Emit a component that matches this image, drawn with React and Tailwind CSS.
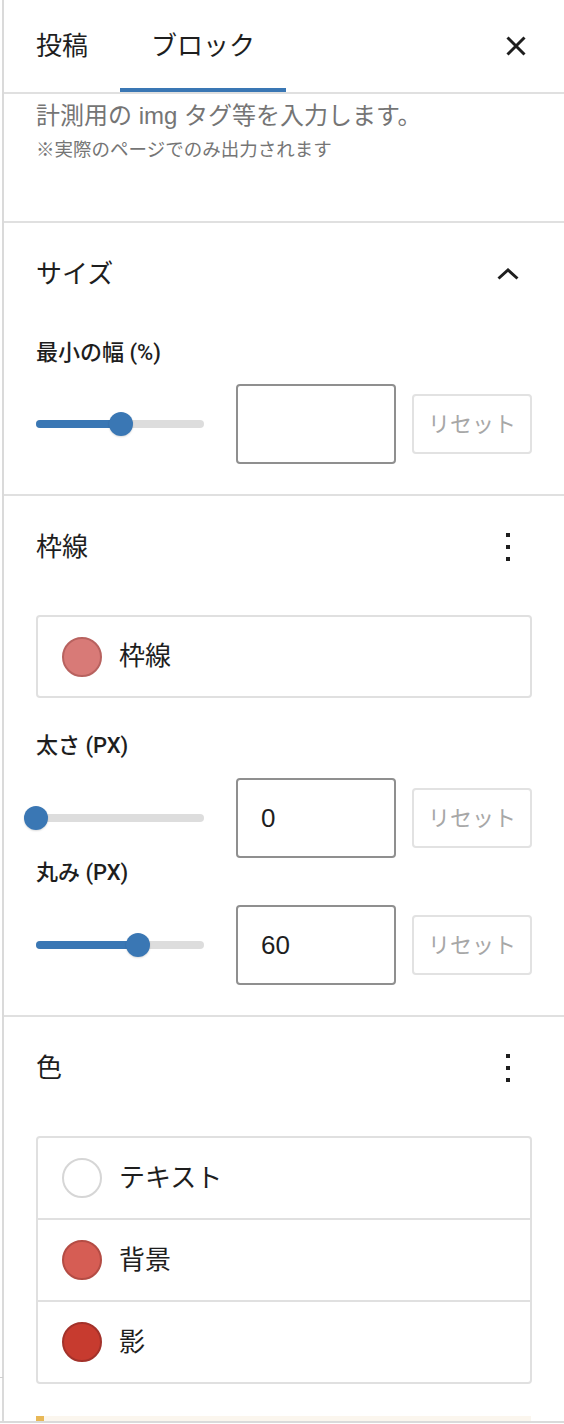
import React from 'react'

const BLUE = 'bg-[#3a77b4]'

function Slider({ value }) {
  return (
    <div className="relative h-[8px] w-[168px] shrink-0 rounded-full bg-[#dddddd]">
      <div className={`absolute left-0 top-0 h-full rounded-full ${BLUE}`} style={{ width: `${value}%` }} />
      <div
        className={`absolute top-1/2 h-6 w-6 -translate-x-1/2 -translate-y-1/2 rounded-full ${BLUE} shadow-[0_1px_2px_rgba(0,0,0,0.15)]`}
        style={{ left: `${value}%` }}
      />
    </div>
  )
}

function RangeRow({ value, text }) {
  return (
    <div className="flex items-center">
      <Slider value={value} />
      <input
        readOnly
        defaultValue={text}
        className="ml-[32px] h-[80px] w-[160px] rounded-[4px] border-2 border-[#8f8f8f] bg-white pl-[23px] text-[26px] text-[#1e1e1e] outline-none"
      />
      <button className="ml-[16px] h-[60px] w-[120px] rounded-[4px] border-2 border-[#e2e2e2] text-[22px] text-[#a7a7a7]">
        リセット
      </button>
    </div>
  )
}

// labels use a font with a real 500 weight for the latin part
function Label({ children, className = '' }) {
  return (
    <div
      className={`text-[22px] font-medium leading-[30px] text-[#1e1e1e] ${className}`}
      style={{ fontFamily: 'Roboto, "Noto Sans CJK JP", sans-serif' }}
    >
      {children}
    </div>
  )
}

function Kebab() {
  return (
    <svg width="4" height="28" viewBox="0 0 4 28" className="mr-[22px]">
      <rect x="0" y="0" width="4" height="4" fill="#1e1e1e" />
      <rect x="0" y="12" width="4" height="4" fill="#1e1e1e" />
      <rect x="0" y="24" width="4" height="4" fill="#1e1e1e" />
    </svg>
  )
}

function SectionTitle({ title, icon }) {
  return (
    <div className="flex h-[50px] items-center justify-between text-[26px] text-[#1e1e1e]">
      <span>{title}</span>
      {icon}
    </div>
  )
}

function ColorRow({ label, swatch, last }) {
  return (
    <div className={`flex items-center gap-[17px] pl-[24px] ${last ? 'h-[80px]' : 'h-[82px] border-b-2 border-[#e0e0e0]'}`}>
      <span className={`h-10 w-10 shrink-0 rounded-full border-2 ${swatch}`} />
      <span className="text-[26px] text-[#1e1e1e]">{label}</span>
    </div>
  )
}

export default function App() {
  return (
    <div
      className="relative flex h-[1424px] w-[564px] flex-col overflow-hidden bg-white"
      style={{ fontFamily: '"Liberation Sans", "Noto Sans CJK JP", sans-serif' }}
    >
      <div className="ml-[2px] flex flex-1 flex-col border-l-2 border-[#dadada]">
        {/* tabs */}
        <div className="flex h-[94px] shrink-0 items-stretch border-b-2 border-[#e0e0e0] pr-[38px]">
          <button className="flex items-center px-8 text-[26px] text-[#1e1e1e]">投稿</button>
          <button className="flex items-center px-[31px] text-[26px] text-[#1e1e1e] shadow-[inset_0_-4px_0_#3a77b4]">
            ブロック
          </button>
          <div className="ml-auto flex items-center">
            <svg width="20" height="20" viewBox="0 0 20 20">
              <path d="M1.5 1.5L18.5 18.5M18.5 1.5L1.5 18.5" stroke="#1e1e1e" strokeWidth="3" />
            </svg>
          </div>
        </div>

        {/* help text */}
        <div className="h-[129px] shrink-0 border-b-2 border-[#e0e0e0] px-8 pt-[5px]">
          <p className="text-[24px] leading-[34px] text-[#757575]">計測用の img タグ等を入力します。</p>
          <p className="mt-[3px] text-[18.5px] leading-[28px] text-[#757575]">※実際のページでのみ出力されます</p>
        </div>

        {/* size */}
        <div className="border-b-2 border-[#e0e0e0] px-8 pb-[30px] pt-[26px]">
          <SectionTitle
            title="サイズ"
            icon={
              <svg width="22" height="12" viewBox="0 0 22 12" className="mr-[13px]">
                <path d="M1.5 10.5L11 2L20.5 10.5" stroke="#1e1e1e" strokeWidth="3" fill="none" />
              </svg>
            }
          />
          <Label className="mt-[39px]">最小の幅 (%)</Label>
          <div className="mt-[16px]">
            <RangeRow value={50.6} text="" />
          </div>
        </div>

        {/* border */}
        <div className="border-b-2 border-[#e0e0e0] px-8 pb-[30px] pt-[26px]">
          <SectionTitle title="枠線" icon={<Kebab />} />
          <div className="mt-[43px] rounded-[4px] border-2 border-[#e0e0e0]">
            <div className="flex h-[79px] items-center gap-[17px] pl-[24px]">
              <span className="h-10 w-10 shrink-0 rounded-full border-2 border-[#b8625f] bg-[#d87a77]" />
              <span className="text-[26px] text-[#1e1e1e]">枠線</span>
            </div>
          </div>
          <Label className="mt-[33px]">太さ (PX)</Label>
          <div className="mt-[17px]">
            <RangeRow value={0} text="0" />
          </div>
          <Label>丸み (PX)</Label>
          <div className="mt-[17px]">
            <RangeRow value={60.7} text="60" />
          </div>
        </div>

        {/* color */}
        <div className="px-8 pt-[26px]">
          <SectionTitle title="色" icon={<Kebab />} />
          <div className="mt-[43px] rounded-[4px] border-2 border-[#e0e0e0]">
            <ColorRow label="テキスト" swatch="border-[#d6d6d6] bg-white" />
            <ColorRow label="背景" swatch="border-[#b44c44] bg-[#d65d54]" />
            <ColorRow label="影" swatch="border-[#a3322a] bg-[#c73b2f]" last />
          </div>
        </div>

        <div className="mx-8 mt-auto flex h-[5px] shrink-0">
          <span className="w-[8px] bg-[#e8b857]" />
          <span className="mr-[1px] flex-1 bg-[#fbf6ee]" />
        </div>
      </div>
      <div className="h-[2px] shrink-0 bg-[#dadada]" />
      <div className="h-[1px] shrink-0 bg-white" />
      <span className="absolute left-0 top-[1377px] h-[1px] w-[3px] bg-[#cfcfcf]" />
    </div>
  )
}
